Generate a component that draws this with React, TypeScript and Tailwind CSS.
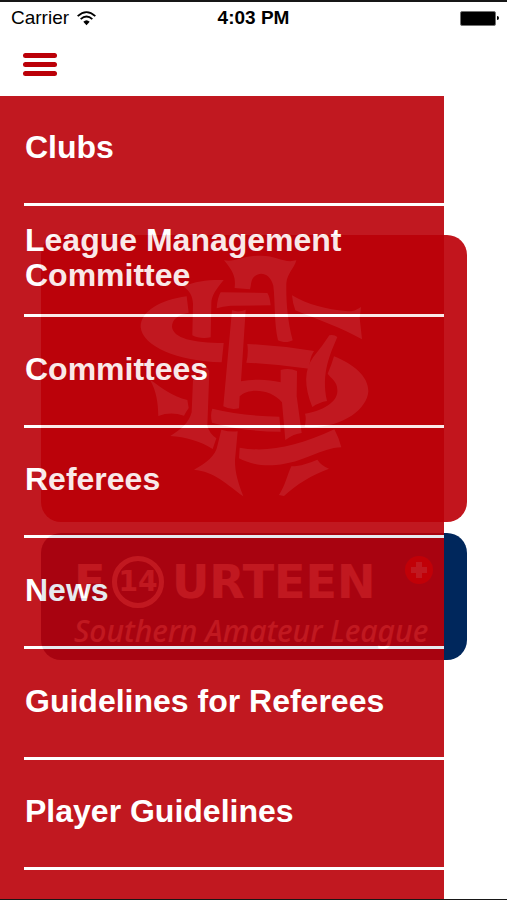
import React from "react";

const menuItems = [
  "Clubs",
  "League Management Committee",
  "Committees",
  "Referees",
  "News",
  "Guidelines for Referees",
  "Player Guidelines",
  "",
];

function WifiIcon() {
  return (
    <svg viewBox="0 0 57 44" className="h-[15px] w-[19px]" aria-hidden="true">
      <g fill="none" stroke="#000" strokeWidth="5.5">
        <path d="M2 15 Q28.5 -9 55 15" />
        <path d="M11 24 Q28.5 8 46 24" />
      </g>
      <path d="M19 32 Q28.5 23 38 32 L28.5 42 Z" fill="#000" />
    </svg>
  );
}

function StatusBar() {
  return (
    <div className="grid h-8 grid-cols-3 items-center px-2 text-[19px] text-black">
      <div className="flex items-center gap-2 pl-[3px]">
        <span>Carrier</span>
        <WifiIcon />
      </div>
      <span className="text-center font-bold">4:03 PM</span>
      <div className="flex items-center justify-end gap-px">
        <span className="h-[15px] w-9 rounded-[2px] border border-neutral-500 bg-black" />
        <span className="h-1 w-[2px] rounded-r-full bg-black" />
      </div>
    </div>
  );
}

function Monogram() {
  return (
    <svg viewBox="55 73 690 735" className="h-[245px] w-[230px]" fill="#fff" role="img" aria-label="League crest">
      <path d="M310 92 C345 98 365 78 420 78 C470 78 490 102 527 92 C520 118 500 130 497 160 C496 215 500 270 516 332 C502 340 485 338 472 332 C460 280 464 220 458 168 C448 132 420 125 402 140 C390 150 392 165 388 179 L342 175 C344 150 345 133 310 92 Z" />
      <path d="M188 170 C225 155 260 150 309 151 C285 180 272 200 272 220 L270 323 C250 327 230 325 215 317 L217 222 C216 200 208 185 188 170 Z" />
      <path d="M300 188 L440 190 Q447 200 450 227 L330 228 Q305 230 288 236 Q290 205 300 188 Z" />
      <path d="M198 200 L204 249 C170 255 154 270 154 292 C158 325 215 340 309 340 L303 398 C170 394 65 350 60 292 C60 245 120 210 198 200 Z" />
      <path d="M334 242 C350 247 360 246 375 240 L361 455 C400 448 440 448 480 458 L480 421 Q505 414 529 424 L528 500 L543 610 Q520 612 494 631 L484 518 C450 475 380 475 357 500 L355 536 Q330 542 308 530 Z" />
      <path d="M514 197 C560 225 620 240 675 244 C700 248 710 238 721 232 L717 265 L724 329 C665 295 590 270 524 242 Q516 222 514 197 Z" />
      <path d="M380 343 Q480 348 580 364 Q566 385 566 417 Q470 404 377 399 Q384 370 380 343 Z" />
      <path d="M626 317 Q640 314 650 322 C630 370 600 430 619 514 Q595 518 575 532 C550 470 550 420 578 382 Q605 350 626 317 Z" />
      <path d="M640 380 C700 405 743 440 743 485 C740 540 660 600 552 592 Q558 565 553 552 C620 540 653 510 650 480 C650 455 630 445 621 432 Q633 405 640 380 Z" />
      <path d="M88 450 C125 475 155 500 200 511 L204 535 Q197 545 190 558 Q150 545 113 559 C112 520 108 485 88 450 Z" />
      <path d="M254 408 Q261 415 266 424 L260 588 Q265 610 287 626 L276 658 C240 635 195 622 149 619 C180 600 205 580 213 548 L217 452 Q240 440 254 408 Z" />
      <path d="M275 537 Q370 560 476 561 L480 606 Q370 606 274 579 Q268 555 275 537 Z" />
      <path d="M302 600 Q328 608 351 605 L343 690 C342 730 355 765 368 800 C320 765 280 725 220 720 C255 700 285 680 291 645 Z" />
      <path d="M357 654 C440 670 530 650 641 599 Q655 625 662 653 C600 655 550 700 465 706 C420 710 380 700 355 686 Z" />
      <path d="M512 710 C540 710 565 700 590 690 Q602 708 625 717 C575 735 525 765 490 799 L475 796 C495 765 500 735 512 710 Z" />
    </svg>
  );
}

function HomeCards() {
  return (
    <section className="flex flex-col gap-[11px] pt-[139px] pr-10 pl-[41px]">
      <div className="flex h-[287px] items-start justify-center rounded-[20px] bg-[#c2151d] pt-[19px]">
        <Monogram />
      </div>
      <div className="h-[127px] rounded-[20px] bg-[#00275c] pt-[18px] pr-[34px] pl-[33px] text-white">
        <div className="flex h-[62px] items-center font-['DejaVu_Sans',sans-serif] text-[46px] leading-none font-bold">
          <span className="w-[38px]">F</span>
          <span className="flex size-[52px] items-center justify-center rounded-full border-[5px] border-white text-[28px]">
            14
          </span>
          <span className="pl-2">URTEEN</span>
          <span className="mb-6 ml-auto flex size-7 items-center justify-center rounded-full bg-[#ff0000]">
            <svg viewBox="0 0 16 16" className="size-4" fill="#fff" aria-hidden="true">
              <path d="M5 0h6v5h5v6h-5v5H5v-5H0V5h5z" />
            </svg>
          </span>
        </div>
        <p className="font-['Noto_Sans',sans-serif] text-[30px] leading-9 font-medium whitespace-nowrap italic">
          Southern Amateur League
        </p>
      </div>
    </section>
  );
}

function SideMenu() {
  return (
    <nav className="mr-[63px] overflow-hidden bg-[#bb0008] pl-6 opacity-90">
      <ul>
        {menuItems.map((item, i) => (
          <li key={i} className="h-[111px] border-b-[3px] border-white nth-[3n+1]:h-[110px]">
            {item && (
              <a href="#" className="flex h-full items-center pr-8 pb-1 pl-px text-[32px] leading-[35px] font-bold text-white">
                {item}
              </a>
            )}
          </li>
        ))}
      </ul>
    </nav>
  );
}

export default function App() {
  return (
    <div className="flex h-screen flex-col overflow-hidden border-t-2 border-b border-neutral-900 bg-white font-['Liberation_Sans',Arial,sans-serif]">
      <StatusBar />
      <header className="flex h-[62px] items-start px-[23px] pt-[19px]">
        <button type="button" aria-label="Menu" className="flex w-[34px] flex-col gap-1">
          <span className="h-[5px] rounded-full bg-[#bb0008]" />
          <span className="h-[5px] rounded-full bg-[#bb0008]" />
          <span className="h-[5px] rounded-full bg-[#bb0008]" />
        </button>
      </header>
      <main className="grid min-h-0 flex-1 grid-cols-1 grid-rows-1 overflow-hidden *:[grid-area:1/1]">
        <HomeCards />
        <SideMenu />
      </main>
    </div>
  );
}
